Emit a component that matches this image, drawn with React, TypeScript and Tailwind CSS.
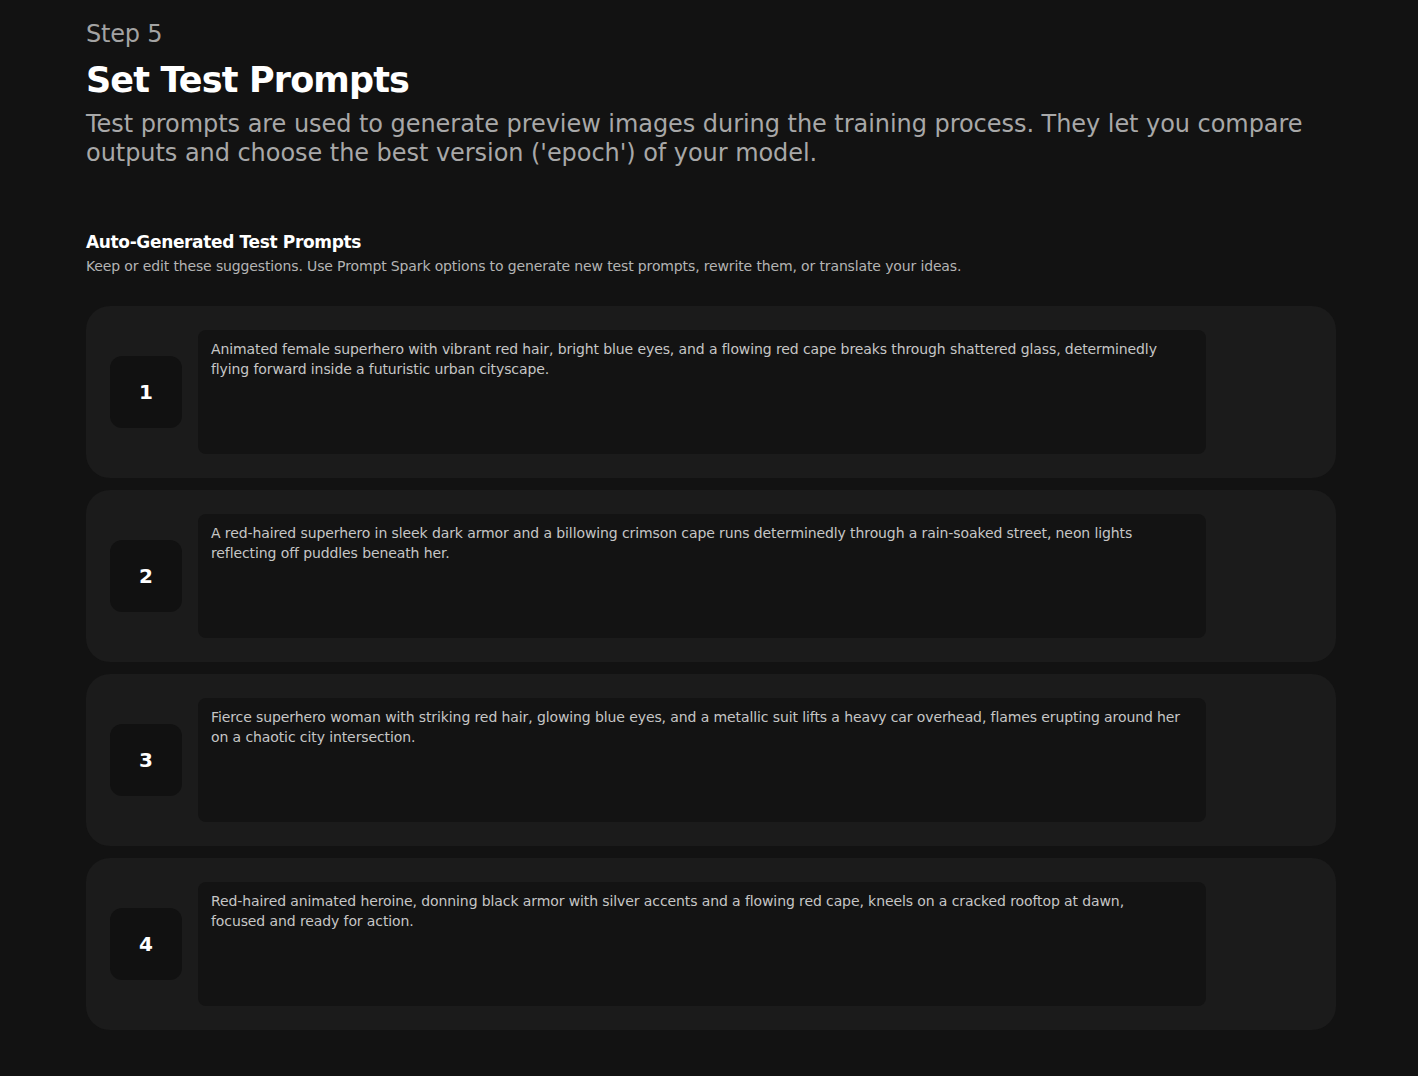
const prompts = [
  'Animated female superhero with vibrant red hair, bright blue eyes, and a flowing red cape breaks through shattered glass, determinedly flying forward inside a futuristic urban cityscape.',
  'A red-haired superhero in sleek dark armor and a billowing crimson cape runs determinedly through a rain-soaked street, neon lights reflecting off puddles beneath her.',
  'Fierce superhero woman with striking red hair, glowing blue eyes, and a metallic suit lifts a heavy car overhead, flames erupting around her on a chaotic city intersection.',
  'Red-haired animated heroine, donning black armor with silver accents and a flowing red cape, kneels on a cracked rooftop at dawn, focused and ready for action.',
];

export default function App() {
  return (
    <div
      className="bg-[#121212] min-h-screen w-full"
      style={{ fontFamily: '"DejaVu Sans", sans-serif' }}
    >
      <div className="pl-[86px] pr-[82px] pt-[18px] pb-[46px] w-[1418px]">
        <div className="text-[24px] leading-[32px] text-[#a3a3a3] tracking-[-0.2px]">Step 5</div>
        <h1 className="mt-[8px] text-[35px] leading-[44px] font-bold text-white tracking-[-0.85px]">Set Test Prompts</h1>
        <p className="mt-[8px] text-[24px] leading-[29px] text-[#a8a8a8] tracking-[-0.05px] w-[1250px]">
          Test prompts are used to generate preview images during the training process. They let you compare outputs and choose the best version ('epoch') of your model.
        </p>
        <h2 className="mt-[62px] text-[17px] leading-[24px] font-bold text-white tracking-[-0.35px]">Auto-Generated Test Prompts</h2>
        <p className="mt-[2px] text-[14px] leading-[20px] text-[#b4b4b4] tracking-[-0.135px]">
          Keep or edit these suggestions. Use Prompt Spark options to generate new test prompts, rewrite them, or translate your ideas.
        </p>
        <div className="mt-[30px] flex flex-col gap-[12px] w-[1250px]">
          {prompts.map((p, i) => (
            <div key={i} className="bg-[#1b1b1b] rounded-[24px] p-[24px] flex items-center gap-[16px]">
              <div className="w-[72px] h-[72px] shrink-0 rounded-[12px] bg-[#111111] flex items-center justify-center text-white text-[20px] font-bold">
                {i + 1}
              </div>
              <textarea
                readOnly
                defaultValue={p}
                className="w-[1008px] h-[124px] shrink-0 resize-none overflow-hidden rounded-[8px] bg-[#131313] pl-[13px] pr-[25px] py-[9px] text-[14px] leading-[20px] text-[#c6c6c6] outline-none tracking-[-0.1px]"
                style={{ fontFamily: '"DejaVu Sans", sans-serif' }}
              />
            </div>
          ))}
        </div>
      </div>
    </div>
  );
}
